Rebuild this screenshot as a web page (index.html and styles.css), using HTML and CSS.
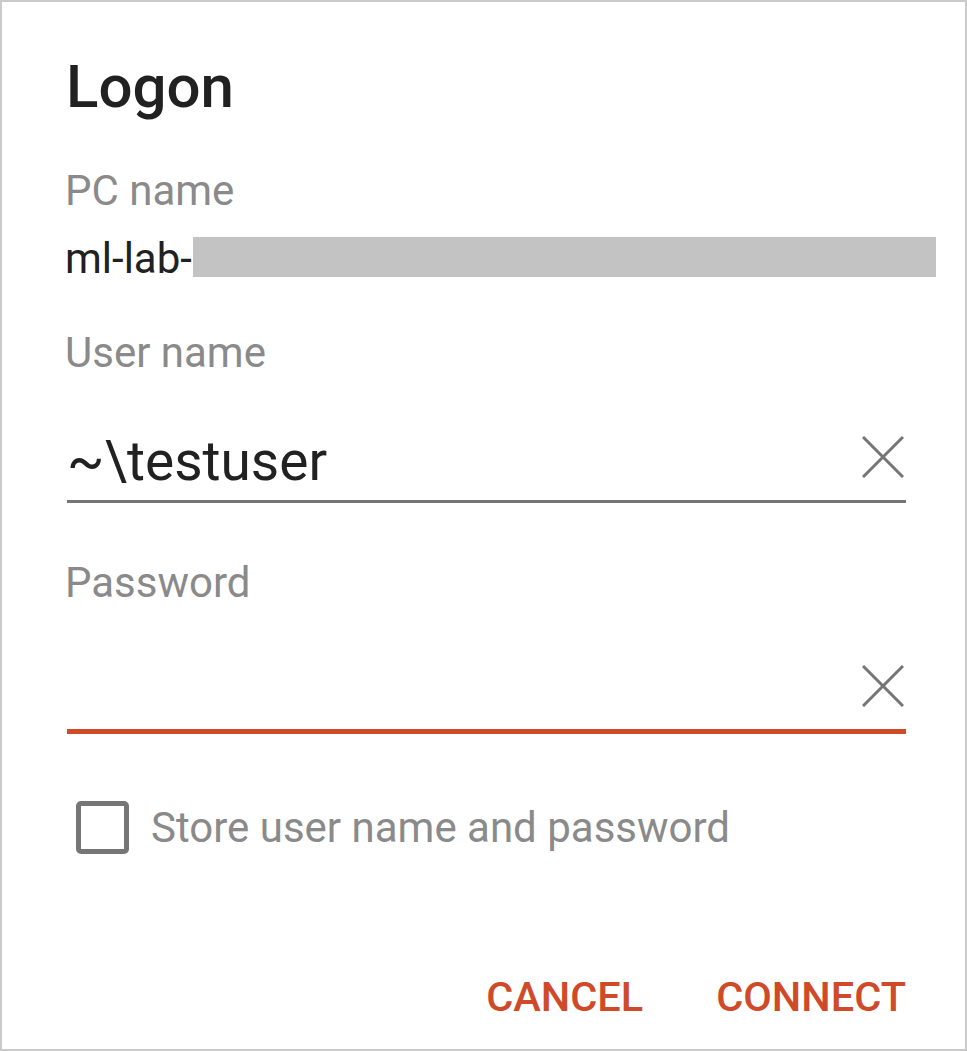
FILE: index.html
```html
<!DOCTYPE html>
<html>
<head>
<meta charset="utf-8">
<link rel="stylesheet" href="styles.css">
</head>
<body>
<div class="dialog">
  <h1 class="title">Logon</h1>
  <div class="label pc-label">PC name</div>
  <div class="pc-value"><span>ml-lab-</span><span class="redact"></span></div>
  <div class="label user-label">User name</div>
  <div class="field user-field">
    <span class="field-text">~\testuser</span>
    <svg class="clear" viewBox="0 0 42 42" width="42" height="42"><path d="M1 1 L41 41 M41 1 L1 41" stroke="#757575" stroke-width="3" fill="none"/></svg>
  </div>
  <div class="label pass-label">Password</div>
  <div class="field pass-field">
    <span class="field-text"></span>
    <svg class="clear" viewBox="0 0 42 42" width="42" height="42"><path d="M1 1 L41 41 M41 1 L1 41" stroke="#757575" stroke-width="3" fill="none"/></svg>
  </div>
  <label class="check-row">
    <span class="checkbox"></span>
    <span class="check-text">Store user name and password</span>
  </label>
  <div class="actions">
    <span class="btn">CANCEL</span>
    <span class="btn">CONNECT</span>
  </div>
</div>
</body>
</html>
```

FILE: styles.css
```css
html, body {
  margin: 0;
  padding: 0;
  background: #ffffff;
}
.dialog {
  box-sizing: border-box;
  width: 967px;
  height: 1051px;
  border: 2px solid #cacaca;
  font-family: Roboto, "Liberation Sans", sans-serif;
  padding: 0 59px 0 63px;
  display: flex;
  flex-direction: column;
}
.title {
  margin: 50px 0 0 1px;
  font-size: 60px;
  font-weight: 500;
  color: #212121;
  line-height: 70px;
}
.label {
  font-size: 42px;
  color: #8a8a8a;
  line-height: 50px;
}
.pc-label {
  margin-top: 44px;
}
.pc-value {
  display: flex;
  align-items: flex-start;
  font-size: 42px;
  color: #212121;
  line-height: 50px;
  margin-top: 18px;
  margin-right: -30px;
}
.redact {
  flex: 1;
  height: 40px;
  margin-top: 3px;
  background: #c3c3c3;
  margin-left: 1px;
}
.user-label {
  margin-top: 44px;
}
.field {
  display: flex;
  align-items: center;
  justify-content: space-between;
  height: 86px;
  padding: 0 2px 0 0;
  margin-left: 2px;
}
.user-field {
  margin-top: 36px;
  border-bottom: 3px solid #757575;
}
.pass-field {
  margin-top: 35px;
  border-bottom: 5px solid #d04a28;
}
.field-text {
  font-size: 55px;
  line-height: 64px;
  padding-top: 8px;
  color: #212121;
}
.pass-label {
  margin-top: 55px;
}
.check-row {
  display: flex;
  align-items: center;
  margin-top: 67px;
  margin-left: 11px;
}
.checkbox {
  box-sizing: border-box;
  width: 53px;
  height: 53px;
  border: 5px solid #767676;
  border-radius: 5px;
}
.check-text {
  margin-left: 22px;
  font-size: 42px;
  color: #8a8a8a;
}
.actions {
  margin-top: auto;
  margin-bottom: 28px;
  display: flex;
  justify-content: flex-end;
  gap: 73px;
}
.btn {
  font-size: 41.5px;
  font-weight: 500;
  color: #cf4a29;
}
```
